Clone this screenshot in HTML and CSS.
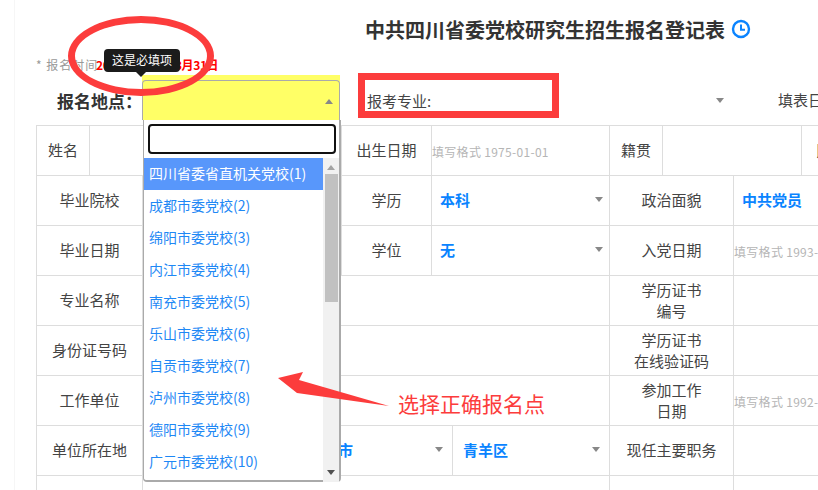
FILE: index.html
```html
<!DOCTYPE html>
<html lang="zh-CN">
<head>
<meta charset="utf-8">
<title>报名登记表</title>
<link rel="stylesheet" href="styles.css">
</head>
<body>
<main class="sheet">
  <h1 class="title">中共四川省委党校研究生招生报名登记表
    <svg class="clock" viewBox="0 0 20 20" width="20" height="20"><circle cx="10" cy="10" r="8" fill="none" stroke="#0a84ff" stroke-width="2.4"/><path d="M10 5.5V10.8H14" fill="none" stroke="#0a84ff" stroke-width="2"/></svg>
  </h1>
  <p class="notice"><span class="notice-label">* 报名时间</span><b class="notice-date">2021年3月1日-3月31日</b></p>
  <div class="picks">
    <label class="pick-label">报名地点：</label>
    <div class="site"><div class="site-box"><i class="caret up"></i></div></div>
    <div class="major"><span>报考专业:</span><i class="caret"></i></div>
    <div class="filled">填表日期</div>
  </div>
  <table class="form">
    <colgroup><col class="c1"><col class="c2"><col class="c3"><col class="c4"><col class="c5"><col class="c6"><col class="c7"><col class="c8"><col class="c9"><col class="c10"></colgroup>
    <tr><td>姓名</td><td colspan="2"></td><td>出生日期</td><td colspan="2" class="hint">填写格式 1975-01-01</td><td>籍贯</td><td colspan="2"></td><td>民族</td></tr>
    <tr><td colspan="2">毕业院校</td><td></td><td>学历</td><td colspan="2" class="val"><div class="sel"><b>本科</b><i class="caret"></i></div></td><td colspan="2">政治面貌</td><td colspan="2" class="val"><div class="sel"><b>中共党员</b></div></td></tr>
    <tr><td colspan="2">毕业日期</td><td></td><td>学位</td><td colspan="2" class="val"><div class="sel"><b>无</b><i class="caret"></i></div></td><td colspan="2">入党日期</td><td colspan="2" class="hint">填写格式 1993-01-01</td></tr>
    <tr><td colspan="2">专业名称</td><td colspan="4"></td><td colspan="2">学历证书<br>编号</td><td colspan="2"></td></tr>
    <tr><td colspan="2">身份证号码</td><td colspan="4"></td><td colspan="2">学历证书<br>在线验证码</td><td colspan="2"></td></tr>
    <tr><td colspan="2">工作单位</td><td colspan="4"></td><td colspan="2">参加工作<br>日期</td><td colspan="2" class="hint">填写格式 1992-01-01</td></tr>
    <tr><td colspan="2">单位所在地</td><td colspan="3" class="val city"><div class="sel end"><b>成都市</b><i class="caret"></i></div></td><td class="val"><div class="sel district"><b>青羊区</b><i class="caret"></i></div></td><td colspan="2">现任主要职务</td><td colspan="2"></td></tr>
    <tr><td colspan="2"></td><td colspan="4"></td><td colspan="2"></td><td colspan="2"></td></tr>
  </table>

  <div class="drop">
    <div class="search"></div>
    <div class="list">
      <ul class="options">
        <li class="on">四川省委省直机关党校(1)</li>
        <li>成都市委党校(2)</li>
        <li>绵阳市委党校(3)</li>
        <li>内江市委党校(4)</li>
        <li>南充市委党校(5)</li>
        <li>乐山市委党校(6)</li>
        <li>自贡市委党校(7)</li>
        <li>泸州市委党校(8)</li>
        <li>德阳市委党校(9)</li>
        <li>广元市委党校(10)</li>
      </ul>
      <div class="bar"><i class="bar-up"></i><div class="thumb"></div><i class="bar-down"></i></div>
    </div>
  </div>

  <div class="tip">这是必填项</div>
  <div class="ring"></div>
  <div class="mark"></div>
  <svg class="arrow" viewBox="0 0 112 36" width="112" height="36"><polygon points="0,7 25,1 21,9 111,35 19,22" fill="#fc3c3c"/></svg>
  <div class="note">选择正确报名点</div>
</main>
</body>
</html>
```

FILE: styles.css
```css
* { box-sizing: border-box; }
html, body { margin: 0; padding: 0; background: #fff; }
body { width: 818px; height: 490px; overflow: hidden; font-family: "Noto Sans CJK SC", "Liberation Sans", sans-serif; color: #444; }

.sheet { position: relative; width: 804px; height: 490px; margin-left: 14px; padding-left: 21px; border-left: 1px solid #f6f6f6; overflow: hidden; }

.title { display: flex; align-items: center; gap: 6px; margin: 0; padding: 13px 0 0 329px; height: 47px; font-size: 20px; line-height: 28px; font-weight: 700; color: #333; white-space: nowrap; }
.clock { flex: none; margin-top: -2px; }

.notice { display: flex; align-items: center; margin: 10px 0 0; height: 16px; font-size: 12px; line-height: 16px; white-space: nowrap; }
.notice-label { width: 60px; color: #999; letter-spacing: 1px; }
.notice-date { color: #f00; font-size: 12px; letter-spacing: -0.4px; }

.picks { display: flex; align-items: flex-end; height: 47px; }
.pick-label { width: 107px; height: 45px; padding: 12px 0 0 21px; font-size: 17px; line-height: 28px; font-weight: 700; color: #333; white-space: nowrap; }
.site { flex: none; width: 198px; height: 45px; padding-top: 5px; background: #ffff66; }
.site-box { position: relative; height: 40px; border: 1px solid #aaa; border-bottom: 0; border-radius: 4px 4px 0 0; }
.major { display: flex; align-items: center; justify-content: space-between; flex: none; width: 365px; height: 45px; margin-left: 27px; padding: 5px 0 0 0; font-size: 15px; color: #444; }
.major .caret { margin-right: 8px; }
.filled { margin-left: 46px; padding-top: 6px; height: 45px; line-height: 37px; font-size: 15px; white-space: nowrap; color: #444; }

.caret { display: block; flex: none; width: 0; height: 0; border-left: 4px solid transparent; border-right: 4px solid transparent; border-top: 5px solid #888; }
.caret.up { position: absolute; right: 6px; top: 18px; border-top: 0; border-bottom: 5px solid #888; }

.form { border-collapse: collapse; table-layout: fixed; width: 824px; margin-top: 5px; font-size: 15px; line-height: 21px; color: #444; }
.c1 { width: 53px; } .c2 { width: 53px; } .c3 { width: 199px; } .c4 { width: 90px; } .c5 { width: 21px; }
.c6 { width: 157px; } .c7 { width: 53px; } .c8 { width: 71px; } .c9 { width: 68px; } .c10 { width: 59px; }
.form td { height: 50px; padding: 0 0 2px; border: 1px solid #ddd; text-align: center; vertical-align: middle; white-space: nowrap; overflow: hidden; }
.form td.hint { padding: 2px 0 0; text-align: left; font-size: 12px; font-weight: 400; letter-spacing: 0.3px; color: #b5b5b5; }
.form td.val { text-align: left; }
.sel { display: flex; align-items: center; justify-content: space-between; padding: 0 6px 0 8px; color: #0a84ff; }
.sel b { font-weight: 700; }
.sel.end { justify-content: flex-end; gap: 82px; padding-right: 9px; }
.sel.district { padding: 0 9px 0 10px; }
.city .sel { padding-left: 0; }

.drop { position: absolute; left: 128px; top: 120px; width: 198px; height: 362px; padding: 4px 0 0; background: #fff; border: 1px solid #aaa; border-top: 0; border-right: 2px solid #aaa; border-bottom: 2px solid #aaa; border-radius: 0 0 4px 4px; }
.search { height: 30px; margin: 0 3px 4px 4px; background: #fff; border: 2px solid #111; border-radius: 4px; }
.list { display: flex; height: 324px; }
.options { flex: 1; margin: 0; padding: 0; list-style: none; font-size: 14px; color: #1e88f5; }
.options li { height: 32px; padding-left: 5px; line-height: 31px; white-space: nowrap; }
.options li.on { background: #5897fb; color: #fff; }
.bar { display: flex; flex-direction: column; align-items: center; flex: none; width: 16px; background: #f1f1f1; }
.thumb { width: 13px; height: 128px; background: #c1c1c1; margin-top: 4px; }
.bar-up { margin-top: 7px; width: 0; height: 0; border-left: 4px solid transparent; border-right: 4px solid transparent; border-bottom: 5px solid #a3a3a3; }
.bar-down { margin-top: auto; margin-bottom: 7px; width: 0; height: 0; border-left: 4px solid transparent; border-right: 4px solid transparent; border-top: 5px solid #505050; }

.tip { position: absolute; left: 89px; top: 49px; width: 76px; height: 23px; background: #1b1b1b; border-radius: 4px; color: #fff; font-size: 12px; line-height: 22px; text-align: center; }
.tip::after { content: ""; position: absolute; left: 32px; top: 23px; border-left: 5px solid transparent; border-right: 5px solid transparent; border-top: 5px solid #1b1b1b; }

.ring { position: absolute; left: 53px; top: 16px; width: 146px; height: 80px; border: 7px solid #fc3c3c; border-radius: 50%; }
.mark { position: absolute; left: 343px; top: 73px; width: 201px; height: 45px; border: 7px solid #fc3c3c; }
.arrow { position: absolute; left: 263px; top: 371px; }
.note { position: absolute; left: 383px; top: 388px; font-size: 21px; line-height: 30px; color: #fc3c3c; white-space: nowrap; }
```
